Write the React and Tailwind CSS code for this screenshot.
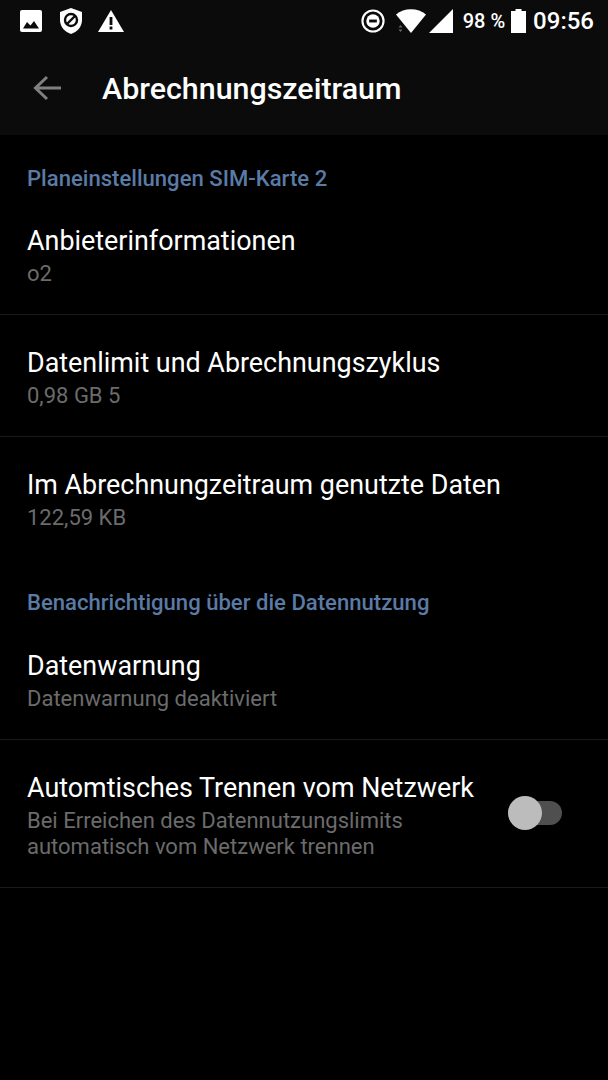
const font = { fontFamily: 'Roboto, sans-serif' };

function Item({ title, sub, pt, border = true, children }) {
  return (
    <div className={`flex items-center pl-[27px] pr-[46px] ${pt} ${border ? 'pb-[27px] border-b border-[#1a1a1a]' : ''}`}>
      <div className="flex-1 min-w-0">
        <div className="text-[26.9px] leading-[34px] text-white">{title}</div>
        <div className="mt-[3px] text-[22px] leading-[26px] text-[#6b6b6b]">{sub}</div>
      </div>
      {children}
    </div>
  );
}

function Header({ children, className }) {
  return <div className={`px-[27px] text-[22.1px] leading-[26px] font-medium text-[#5a7ba6] ${className}`}>{children}</div>;
}

export default function App() {
  return (
    <div className="w-[608px] h-[1080px] bg-black overflow-hidden flex flex-col" style={font}>
      <div className="bg-[#0b0b0b] h-[135px] shrink-0 flex flex-col">
        <div className="h-[41px] flex items-center pl-[20px] pr-[14px] text-white">
          <svg width="22" height="22" viewBox="0 0 22 22" className="mr-[18px]">
            <rect width="22" height="22" rx="2" fill="#fff" />
            <path d="M3 18.5 L7 12 L10.5 15.5 L14 11 L19 18.5 Z" fill="#0b0b0b" />
          </svg>
          <svg width="22" height="26" viewBox="0 0 22 26" className="mr-[16px]">
            <path d="M11 0 L22 4 V12 C22 19 17 24 11 26 C5 24 0 19 0 12 V4 Z" fill="#fff" />
            <circle cx="11" cy="12" r="6" fill="none" stroke="#0b0b0b" strokeWidth="2.4" />
            <path d="M7 16 L15 8" stroke="#0b0b0b" strokeWidth="2.4" />
          </svg>
          <svg width="26" height="22" viewBox="0 0 26 22">
            <path d="M13 0 L26 22 H0 Z" fill="#fff" />
            <rect x="11.6" y="7" width="2.8" height="8" fill="#0b0b0b" />
            <rect x="11.6" y="16.5" width="2.8" height="3" fill="#0b0b0b" />
          </svg>
          <div className="flex-1" />
          <svg width="24" height="24" viewBox="0 0 25 25" className="mr-[11px]">
            <circle cx="12.5" cy="12.5" r="11" fill="none" stroke="#fff" strokeWidth="2.2" />
            <circle cx="12.5" cy="12.5" r="7" fill="#fff" />
            <rect x="8.5" y="11" width="8" height="3" fill="#0b0b0b" />
          </svg>
          <svg width="30" height="24" viewBox="0 0 30 24" className="mr-[3px]">
            <path d="M0 5.5 C8 -1.5 22 -1.5 30 5.5 L15 24 Z" fill="#fff" />
            <path d="M2.5 18.5 L4.5 16 L6.5 18.5 Z M2.5 20.5 L4.5 23 L6.5 20.5 Z" fill="#666" />
          </svg>
          <svg width="24" height="24" viewBox="0 0 24 24" className="mr-[10px]">
            <path d="M24 0 V24 H0 Z" fill="#fff" />
          </svg>
          <span className="text-[20px] mr-[6px] mt-px font-medium">98 %</span>
          <svg width="15" height="24" viewBox="0 0 15 24" className="mr-[7px]">
            <path d="M4.5 0 H10.5 V2 H15 V24 H0 V2 H4.5 Z" fill="#fff" />
          </svg>
          <span className="text-[24px] mt-px font-medium">09:56</span>
        </div>
        <div className="flex-1 flex items-center pl-[33px] pt-[2px]">
          <svg width="29" height="26" viewBox="0 0 29 26" className="mr-[40px] mb-[2px]">
            <path d="M28 13 H3 M14 2 L2.5 13 L14 24" fill="none" stroke="#808080" strokeWidth="3" />
          </svg>
          <span className="text-[30.4px] font-medium text-white">Abrechnungszeitraum</span>
        </div>
      </div>
      <Header className="pt-[30px]">Planeinstellungen SIM-Karte 2</Header>
      <Item title="Anbieterinformationen" sub="o2" pt="pt-[33px]" />
      <Item title="Datenlimit und Abrechnungszyklus" sub="0,98 GB 5" pt="pt-[31px]" />
      <Item title="Im Abrechnungzeitraum genutzte Daten" sub="122,59 KB" pt="pt-[31px]" border={false} />
      <Header className="pt-[58px]">Benachrichtigung über die Datennutzung</Header>
      <Item title="Datenwarnung" sub="Datenwarnung deaktiviert" pt="pt-[34px]" />
      <Item
        title="Automtisches Trennen vom Netzwerk"
        sub={<>Bei Erreichen des Datennutzungslimits<br />automatisch vom Netzwerk trennen</>}
        pt="pt-[31px]"
      >
        <div className="relative w-[54px] h-[24px] mb-[5px] rounded-full bg-[#4f4f4f]">
          <div className="absolute left-0 top-[-5px] w-[34px] h-[34px] rounded-full bg-[#bcbcbc]" />
        </div>
      </Item>
    </div>
  );
}
